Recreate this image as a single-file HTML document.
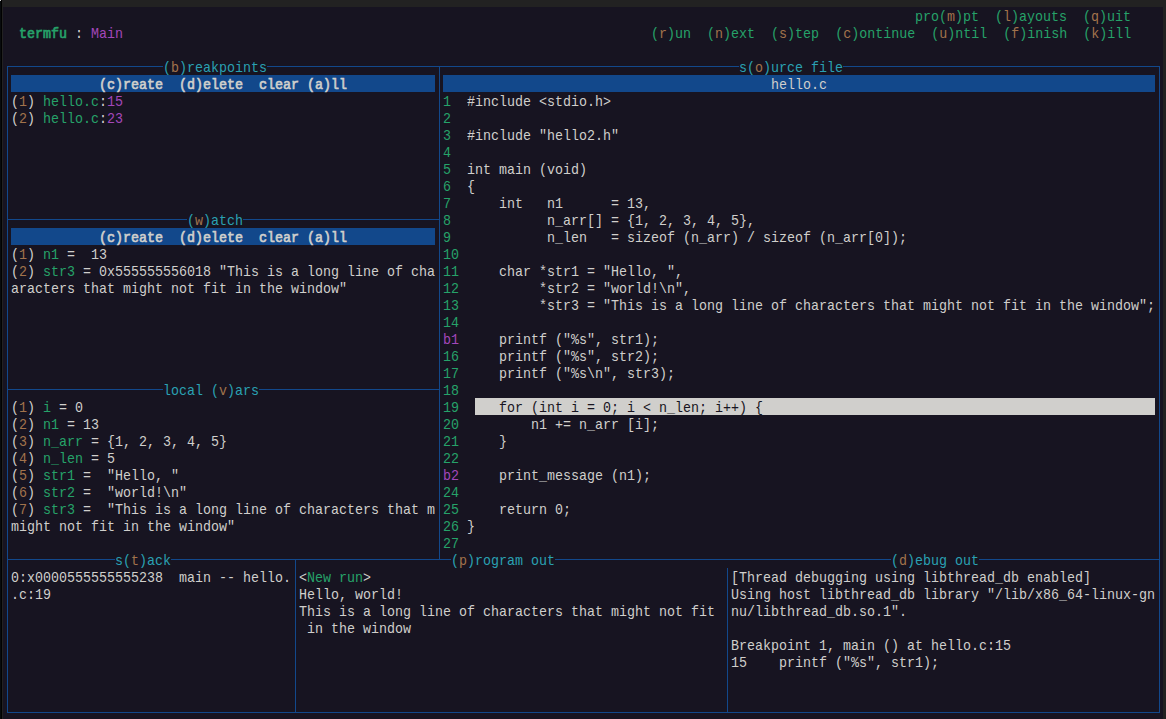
<!DOCTYPE html>
<html lang="en"><head><meta charset="utf-8"><title>termfu : Main</title>
<style>
html,body{margin:0;padding:0}
body{width:1166px;height:719px;overflow:hidden;background:#171421;position:relative;
font-family:"Liberation Mono","DejaVu Sans Mono",monospace;}
#top{position:absolute;left:0;top:0;width:1166px;height:7px;background:#222222}
#lft{position:absolute;left:0;top:0;width:1px;height:719px;background:#080b0d;border-right:1px solid #010101}
#lft2{position:absolute;left:2px;top:0;width:1px;height:719px;background:#222222}
#rgt{position:absolute;left:1163px;top:0;width:3px;height:719px;background:#222222}
#dot{position:absolute;left:0;top:0;width:1px;height:1px;background:#cfcfcf}
.l{position:absolute;background:#12488b}
.bar{position:absolute;background:#12488b;height:17px}
.hl{position:absolute;background:#d0cfcc;height:17px}
.s{position:absolute;white-space:pre;font-size:15px;line-height:17px;height:17px;
transform:scaleX(0.888744);transform-origin:0 0;color:#d0cfcc}
.mk{position:absolute;background:#171421;height:5px}
.w{color:#d0cfcc}.W{color:#d0cfcc}.g{color:#26a269}.y{color:#a2734c}.m{color:#a347ba}.c{color:#2aa1b3}.k{color:#171421}
.b{-webkit-text-stroke:0.7px currentColor}
</style></head><body>
<div id="top"></div><div id="lft"></div><div id="lft2"></div><div id="rgt"></div><div id="dot"></div>

<div class="l" style="left:7px;top:66px;width:1153px;height:1px"></div>
<div class="l" style="left:7px;top:219px;width:433px;height:1px"></div>
<div class="l" style="left:7px;top:389px;width:433px;height:1px"></div>
<div class="l" style="left:7px;top:559px;width:1153px;height:1px"></div>
<div class="l" style="left:7px;top:712px;width:1153px;height:1px"></div>
<div class="l" style="left:7px;top:66px;width:1px;height:647px"></div>
<div class="l" style="left:1159px;top:66px;width:1px;height:647px"></div>
<div class="l" style="left:439px;top:66px;width:1px;height:494px"></div>
<div class="l" style="left:295px;top:559px;width:1px;height:154px"></div>
<div class="l" style="left:727px;top:568px;width:1px;height:145px"></div>
<div class="mk" style="left:163px;top:64px;width:104px"></div>
<div class="mk" style="left:739px;top:64px;width:104px"></div>
<div class="mk" style="left:187px;top:217px;width:56px"></div>
<div class="mk" style="left:163px;top:387px;width:96px"></div>
<div class="mk" style="left:115px;top:557px;width:56px"></div>
<div class="mk" style="left:451px;top:557px;width:104px"></div>
<div class="mk" style="left:891px;top:557px;width:88px"></div>
<div class="bar" style="left:11px;top:75px;width:424px"></div>
<div class="bar" style="left:11px;top:228px;width:424px"></div>
<div class="bar" style="left:443px;top:75px;width:712px"></div>
<div class="hl" style="left:475px;top:398px;width:680px"></div>
<div class="s" style="left:915px;top:9px"><span class="g">pro</span><span class="g">(</span><span class="y">m</span><span class="g">)pt</span><span class="g">  </span><span class="g">(</span><span class="y">l</span><span class="g">)ayouts</span><span class="g">  </span><span class="g">(</span><span class="y">q</span><span class="g">)uit</span></div>
<div class="s" style="left:651px;top:26px"><span class="g">(</span><span class="y">r</span><span class="g">)un</span><span class="g">  </span><span class="g">(</span><span class="y">n</span><span class="g">)ext</span><span class="g">  </span><span class="g">(</span><span class="y">s</span><span class="g">)tep</span><span class="g">  </span><span class="g">(</span><span class="y">c</span><span class="g">)ontinue</span><span class="g">  </span><span class="g">(</span><span class="y">u</span><span class="g">)ntil</span><span class="g">  </span><span class="g">(</span><span class="y">f</span><span class="g">)inish</span><span class="g">  </span><span class="g">(</span><span class="y">k</span><span class="g">)ill</span></div>
<div class="s" style="left:19px;top:26px"><span class="g b">termfu</span><span class="w"> : </span><span class="m">Main</span></div>
<div class="s" style="left:163px;top:60px"><span class="c">(</span><span class="y">b</span><span class="c">)reakpoints</span></div>
<div class="s" style="left:739px;top:60px"><span class="c">s(</span><span class="y">o</span><span class="c">)urce file</span></div>
<div class="s" style="left:99px;top:77px"><span class="W b">(c)reate  (d)elete  clear (a)ll</span></div>
<div class="s" style="left:771px;top:77px"><span class="W">hello.c</span></div>
<div class="s" style="left:11px;top:94px"><span class="w">(</span><span class="y">1</span><span class="w">) </span><span class="g">hello.c</span><span class="w">:</span><span class="m">15</span></div>
<div class="s" style="left:443px;top:94px"><span class="g">1</span></div>
<div class="s" style="left:467px;top:94px"><span class="w">#include &lt;stdio.h&gt;</span></div>
<div class="s" style="left:11px;top:111px"><span class="w">(</span><span class="y">2</span><span class="w">) </span><span class="g">hello.c</span><span class="w">:</span><span class="m">23</span></div>
<div class="s" style="left:443px;top:111px"><span class="g">2</span></div>
<div class="s" style="left:443px;top:128px"><span class="g">3</span></div>
<div class="s" style="left:467px;top:128px"><span class="w">#include "hello2.h"</span></div>
<div class="s" style="left:443px;top:145px"><span class="g">4</span></div>
<div class="s" style="left:443px;top:162px"><span class="g">5</span></div>
<div class="s" style="left:467px;top:162px"><span class="w">int main (void)</span></div>
<div class="s" style="left:443px;top:179px"><span class="g">6</span></div>
<div class="s" style="left:467px;top:179px"><span class="w">{</span></div>
<div class="s" style="left:443px;top:196px"><span class="g">7</span></div>
<div class="s" style="left:467px;top:196px"><span class="w">    int   n1      = 13,</span></div>
<div class="s" style="left:187px;top:213px"><span class="c">(</span><span class="y">w</span><span class="c">)atch</span></div>
<div class="s" style="left:443px;top:213px"><span class="g">8</span></div>
<div class="s" style="left:467px;top:213px"><span class="w">          n_arr[] = {1, 2, 3, 4, 5},</span></div>
<div class="s" style="left:99px;top:230px"><span class="W b">(c)reate  (d)elete  clear (a)ll</span></div>
<div class="s" style="left:443px;top:230px"><span class="g">9</span></div>
<div class="s" style="left:467px;top:230px"><span class="w">          n_len   = sizeof (n_arr) / sizeof (n_arr[0]);</span></div>
<div class="s" style="left:11px;top:247px"><span class="w">(</span><span class="y">1</span><span class="w">) </span><span class="g">n1</span><span class="w"> =  13</span></div>
<div class="s" style="left:443px;top:247px"><span class="g">10</span></div>
<div class="s" style="left:11px;top:264px"><span class="w">(</span><span class="y">2</span><span class="w">) </span><span class="g">str3</span><span class="w"> = 0x555555556018 "This is a long line of cha</span></div>
<div class="s" style="left:443px;top:264px"><span class="g">11</span></div>
<div class="s" style="left:467px;top:264px"><span class="w">    char *str1 = "Hello, ",</span></div>
<div class="s" style="left:11px;top:281px"><span class="w">aracters that might not fit in the window"</span></div>
<div class="s" style="left:443px;top:281px"><span class="g">12</span></div>
<div class="s" style="left:467px;top:281px"><span class="w">         *str2 = "world!\n",</span></div>
<div class="s" style="left:443px;top:298px"><span class="g">13</span></div>
<div class="s" style="left:467px;top:298px"><span class="w">         *str3 = "This is a long line of characters that might not fit in the window";</span></div>
<div class="s" style="left:443px;top:315px"><span class="g">14</span></div>
<div class="s" style="left:443px;top:332px"><span class="m">b1</span></div>
<div class="s" style="left:467px;top:332px"><span class="w">    printf ("%s", str1);</span></div>
<div class="s" style="left:443px;top:349px"><span class="g">16</span></div>
<div class="s" style="left:467px;top:349px"><span class="w">    printf ("%s", str2);</span></div>
<div class="s" style="left:443px;top:366px"><span class="g">17</span></div>
<div class="s" style="left:467px;top:366px"><span class="w">    printf ("%s\n", str3);</span></div>
<div class="s" style="left:163px;top:383px"><span class="c">local (</span><span class="y">v</span><span class="c">)ars</span></div>
<div class="s" style="left:443px;top:383px"><span class="g">18</span></div>
<div class="s" style="left:11px;top:400px"><span class="w">(</span><span class="y">1</span><span class="w">) </span><span class="g">i</span><span class="w"> = 0</span></div>
<div class="s" style="left:443px;top:400px"><span class="g">19</span></div>
<div class="s" style="left:467px;top:400px"><span class="k">    for (int i = 0; i &lt; n_len; i++) {</span></div>
<div class="s" style="left:11px;top:417px"><span class="w">(</span><span class="y">2</span><span class="w">) </span><span class="g">n1</span><span class="w"> = 13</span></div>
<div class="s" style="left:443px;top:417px"><span class="g">20</span></div>
<div class="s" style="left:467px;top:417px"><span class="w">        n1 += n_arr [i];</span></div>
<div class="s" style="left:11px;top:434px"><span class="w">(</span><span class="y">3</span><span class="w">) </span><span class="g">n_arr</span><span class="w"> = {1, 2, 3, 4, 5}</span></div>
<div class="s" style="left:443px;top:434px"><span class="g">21</span></div>
<div class="s" style="left:467px;top:434px"><span class="w">    }</span></div>
<div class="s" style="left:11px;top:451px"><span class="w">(</span><span class="y">4</span><span class="w">) </span><span class="g">n_len</span><span class="w"> = 5</span></div>
<div class="s" style="left:443px;top:451px"><span class="g">22</span></div>
<div class="s" style="left:11px;top:468px"><span class="w">(</span><span class="y">5</span><span class="w">) </span><span class="g">str1</span><span class="w"> =  "Hello, "</span></div>
<div class="s" style="left:443px;top:468px"><span class="m">b2</span></div>
<div class="s" style="left:467px;top:468px"><span class="w">    print_message (n1);</span></div>
<div class="s" style="left:11px;top:485px"><span class="w">(</span><span class="y">6</span><span class="w">) </span><span class="g">str2</span><span class="w"> =  "world!\n"</span></div>
<div class="s" style="left:443px;top:485px"><span class="g">24</span></div>
<div class="s" style="left:11px;top:502px"><span class="w">(</span><span class="y">7</span><span class="w">) </span><span class="g">str3</span><span class="w"> =  "This is a long line of characters that m</span></div>
<div class="s" style="left:443px;top:502px"><span class="g">25</span></div>
<div class="s" style="left:467px;top:502px"><span class="w">    return 0;</span></div>
<div class="s" style="left:11px;top:519px"><span class="w">might not fit in the window"</span></div>
<div class="s" style="left:443px;top:519px"><span class="g">26</span></div>
<div class="s" style="left:467px;top:519px"><span class="w">}</span></div>
<div class="s" style="left:443px;top:536px"><span class="g">27</span></div>
<div class="s" style="left:115px;top:553px"><span class="c">s(</span><span class="y">t</span><span class="c">)ack</span></div>
<div class="s" style="left:451px;top:553px"><span class="c">(</span><span class="y">p</span><span class="c">)rogram out</span></div>
<div class="s" style="left:891px;top:553px"><span class="c">(</span><span class="y">d</span><span class="c">)ebug out</span></div>
<div class="s" style="left:11px;top:570px"><span class="w">0:x0000555555555238  main -- hello.</span></div>
<div class="s" style="left:299px;top:570px"><span class="w">&lt;</span><span class="g">New run</span><span class="w">&gt;</span></div>
<div class="s" style="left:731px;top:570px"><span class="w">[Thread debugging using libthread_db enabled]</span></div>
<div class="s" style="left:11px;top:587px"><span class="w">.c:19</span></div>
<div class="s" style="left:299px;top:587px"><span class="w">Hello, world!</span></div>
<div class="s" style="left:731px;top:587px"><span class="w">Using host libthread_db library "/lib/x86_64-linux-gn</span></div>
<div class="s" style="left:299px;top:604px"><span class="w">This is a long line of characters that might not fit</span></div>
<div class="s" style="left:731px;top:604px"><span class="w">nu/libthread_db.so.1".</span></div>
<div class="s" style="left:299px;top:621px"><span class="w"> in the window</span></div>
<div class="s" style="left:731px;top:638px"><span class="w">Breakpoint 1, main () at hello.c:15</span></div>
<div class="s" style="left:731px;top:655px"><span class="w">15    printf ("%s", str1);</span></div>
</body></html>
